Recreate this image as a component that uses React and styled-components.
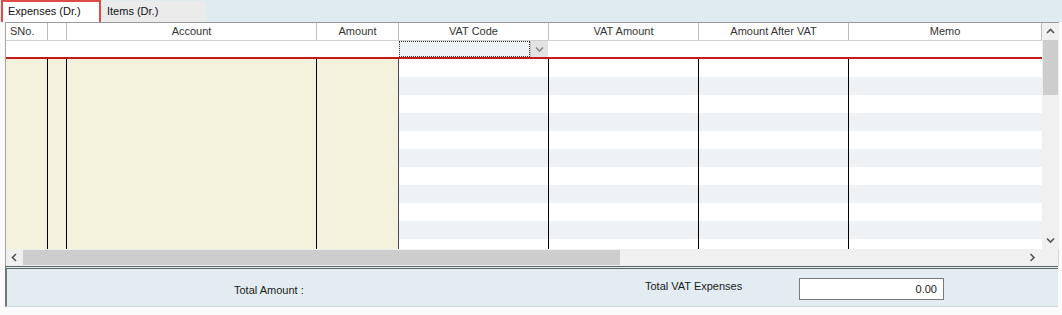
import React from 'react'
import styled, { createGlobalStyle } from 'styled-components';

const GlobalStyle = createGlobalStyle`
    html, body {
        margin: 0;
        padding: 0;
        background: #ffffff;
    }
    body {
        font-family: "Liberation Sans", Arial, sans-serif;
        font-size: 11px;
        color: #1a1a1a;
    }
`;

const columns = [
    { key: 'sno', title: 'SNo.', width: 42, align: 'left', tint: 'beige' },
    { key: 'blank', title: '', width: 19, tint: 'beige' },
    { key: 'account', title: 'Account', width: 250, tint: 'beige' },
    { key: 'amount', title: 'Amount', width: 82, tint: 'beige', edge: '#4a4a4a' },
    { key: 'vatcode', title: 'VAT Code', width: 150, tint: 'stripe' },
    { key: 'vatamount', title: 'VAT Amount', width: 150, tint: 'stripe' },
    { key: 'after', title: 'Amount After VAT', width: 150, tint: 'stripe' },
    { key: 'memo', title: 'Memo', width: 193, tint: 'stripe', edge: 'transparent' },
];

const Chevron = ({ dir = 'down', color = '#555' }) => {
    const paths = {
        down: 'M1 1.5 L4.5 5 L8 1.5',
        up: 'M1 5 L4.5 1.5 L8 5',
        left: 'M5 1 L1.5 4.5 L5 8',
        right: 'M1.5 1 L5 4.5 L1.5 8',
    };
    const horizontal = dir === 'left' || dir === 'right';
    return (
        <svg width={horizontal ? 7 : 9} height={horizontal ? 9 : 7} viewBox={horizontal ? '0 0 7 9' : '0 0 9 7'}>
            <path d={paths[dir]} fill="none" stroke={color} strokeWidth="1.6" />
        </svg>
    );
};

function App() {
    return (
        <Page>
            <GlobalStyle />
            <TabStrip>
                <Tab active>Expenses (Dr.)</Tab>
                <Tab>Items (Dr.)</Tab>
            </TabStrip>

            <GridFrame>
                <GridMain>
                    <GridArea>
                        <HeaderRow>
                            {columns.map((c) => (
                                <HeaderCell key={c.key} w={c.width} align={c.align}>{c.title}</HeaderCell>
                            ))}
                        </HeaderRow>

                        <NewRow>
                            {columns.map((c) =>
                                c.key === 'vatcode' ? (
                                    <ComboCell key={c.key} w={c.width}>
                                        <ComboField />
                                        <ComboButton><Chevron dir="down" color="#8a8a8a" /></ComboButton>
                                    </ComboCell>
                                ) : (
                                    <NewCell key={c.key} w={c.width} />
                                )
                            )}
                        </NewRow>

                        <Body>
                            {columns.map((c) => (
                                <BodyColumn key={c.key} w={c.width} tint={c.tint} edge={c.edge} />
                            ))}
                        </Body>
                    </GridArea>

                    <VScroll>
                        <ArrowBox><Chevron dir="up" /></ArrowBox>
                        <VThumb />
                        <Spacer />
                        <ArrowBox><Chevron dir="down" /></ArrowBox>
                    </VScroll>
                </GridMain>

                <HScroll>
                    <ArrowBox><Chevron dir="left" /></ArrowBox>
                    <HThumb />
                    <Spacer />
                    <ArrowBox><Chevron dir="right" /></ArrowBox>
                    <Corner />
                </HScroll>
            </GridFrame>

            <Footer>
                <span />
                <FooterLabel top={15}>Total Amount :</FooterLabel>
                <FooterLabel top={11}>Total VAT Expenses</FooterLabel>
                <TotalBox>0.00</TotalBox>
            </Footer>
        </Page>
    )
}

export default App;


const Page = styled.div`
    width: 1062px;
    height: 315px;
    background: #fbfbfb;
    overflow: hidden;
`;

const TabStrip = styled.div`
    display: flex;
    align-items: flex-end;
    height: 22px;
    background: #e0ebef;
    padding-left: 1px;
`;

const Tab = styled.div`
    box-sizing: border-box;
    height: ${(p) => (p.active ? '22px' : '21px')};
    width: ${(p) => (p.active ? '100px' : '105px')};
    padding: ${(p) => (p.active ? '3px 0 0 5px' : '4px 0 0 6px')};
    background: ${(p) => (p.active ? '#ffffff' : '#ebebeb')};
    border: ${(p) => (p.active ? '2px solid #df4b46' : 'none')};
    border-bottom: none;
    color: #111;
    white-space: nowrap;
`;

const GridFrame = styled.div`
    margin-left: 5px;
    width: 1054px;
    box-sizing: border-box;
    border-left: 1px solid #a3a3a3;
    border-right: 1px solid #d5d5d5;
    background: #ffffff;
`;

const GridMain = styled.div`
    display: flex;
`;

const GridArea = styled.div`
    display: flex;
    flex-direction: column;
    width: 1036px;
`;

const HeaderRow = styled.div`
    display: flex;
    height: 17px;
    border-top: 1px solid #9a9a9a;
    border-bottom: 1px solid #cfcfcf;
`;

const HeaderCell = styled.div`
    box-sizing: border-box;
    width: ${(p) => p.w}px;
    flex: none;
    border-right: 1px solid #bdbdbd;
    text-align: ${(p) => p.align || 'center'};
    padding: 0 4px;
    line-height: 17px;
    color: #333;
    white-space: nowrap;
`;

const NewRow = styled.div`
    display: flex;
    height: 16px;
    border-bottom: 2px solid #c41a1a;
`;

const NewCell = styled.div`
    width: ${(p) => p.w}px;
    flex: none;
`;

const ComboCell = styled.div`
    display: flex;
    width: ${(p) => p.w}px;
    flex: none;
    box-sizing: border-box;
    border-right: 1px solid #ffffff;
`;

const ComboField = styled.div`
    flex: 1;
    background: #eef3f8;
    border: 1px dotted #333;
`;

const ComboButton = styled.div`
    display: flex;
    align-items: center;
    justify-content: center;
    width: 17px;
    background: #e3e3e3;
    border-left: 1px solid #c6c6c6;
`;

const Body = styled.div`
    display: flex;
    height: 190px;
`;

const BodyColumn = styled.div`
    box-sizing: border-box;
    width: ${(p) => p.w}px;
    flex: none;
    border-right: 1px solid ${(p) => p.edge || '#000'};
    background: ${(p) =>
        p.tint === 'beige'
            ? '#f4f2dc'
            : 'repeating-linear-gradient(to bottom, #ffffff 0 18px, #eef2f7 18px 36px)'};
`;

const VScroll = styled.div`
    display: flex;
    flex-direction: column;
    width: 17px;
    background: #f0f0f0;
    border-top: 1px solid #9a9a9a;
`;

const ArrowBox = styled.div`
    display: flex;
    align-items: center;
    justify-content: center;
    width: 17px;
    height: 17px;
    flex: none;
    background: #f0f0f0;
`;

const VThumb = styled.div`
    height: 55px;
    margin: 0 1px;
    background: #cdcdcd;
`;

const Spacer = styled.div`
    flex: 1;
`;

const HScroll = styled.div`
    display: flex;
    height: 17px;
    background: #f0f0f0;
`;

const HThumb = styled.div`
    width: 597px;
    margin: 1px 0;
    background: #cdcdcd;
`;

const Corner = styled.div`
    width: 17px;
    background: #f0f0f0;
`;

const Footer = styled.div`
    display: grid;
    grid-template-columns: 227px 411px 154px 145px;
    align-items: start;
    margin-left: 5px;
    width: 1053px;
    height: 41px;
    box-sizing: border-box;
    background: #e3edf1;
    border-top: 3px double #5b6563;
    border-left: 2px solid #6e7878;
    border-bottom: 1px solid #cfdade;
`;

const FooterLabel = styled.div`
    padding-top: ${(p) => p.top}px;
    color: #1a1a1a;
    white-space: nowrap;
`;

const TotalBox = styled.div`
    box-sizing: border-box;
    margin-top: 9px;
    height: 22px;
    background: #ffffff;
    border: 1px solid #7a7a7a;
    text-align: right;
    padding: 4px 6px 0 0;
    color: #1a1a1a;
`;
